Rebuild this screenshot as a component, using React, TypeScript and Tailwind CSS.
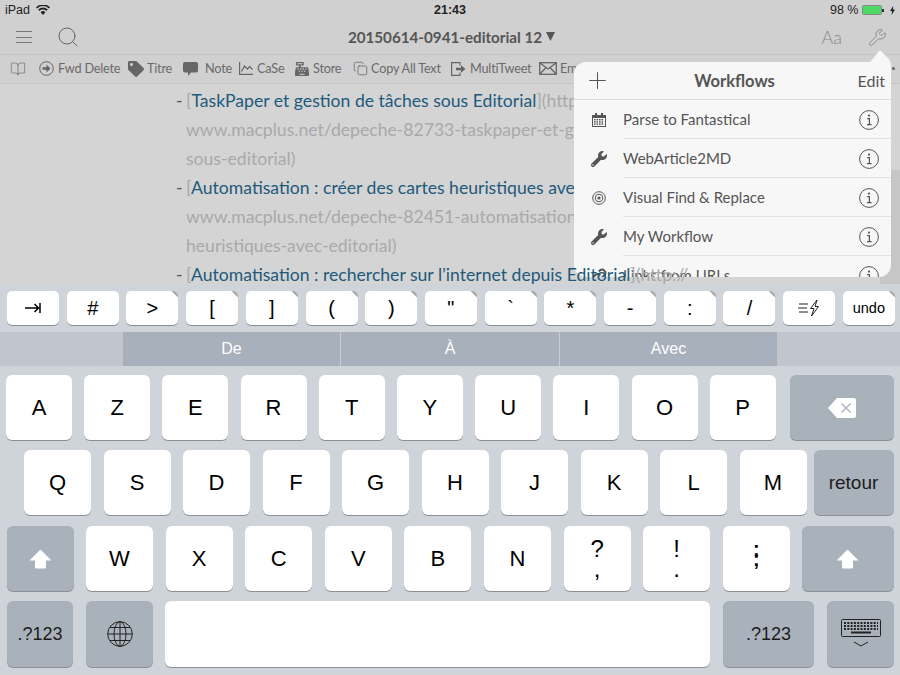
import type { ReactNode } from "react";
import { BookOpen, Copy, Plus, Search, Wrench } from "lucide-react";
import { FaCashRegister, FaTag, FaWrench } from "react-icons/fa";

const UI_FONT = "font-['Lato','Noto_Sans',sans-serif]";
const KEY_FONT = "font-['Liberation_Sans',Arial,sans-serif]";

function Corner() {
  return (
    <svg className="absolute top-0 right-0" width="8" height="8" viewBox="0 0 8 8">
      <path d="M1.500 0H3a5 5 0 0 1 5 5v1.500z" fill="#a6a6a6" />
    </svg>
  );
}

function SmallKey({ children, corner = true }: { children: ReactNode; corner?: boolean }) {
  return (
    <div className="relative flex h-[34px] w-[52px] items-center justify-center rounded-[5px] bg-white text-[20px] leading-none text-black shadow-[0_1px_0_#8b8f95]">
      {corner ? <Corner /> : null}
      {children}
    </div>
  );
}

function Key({
  children,
  className = "w-[66px]",
  text = "text-[22px]",
  dark = false,
}: {
  children?: ReactNode;
  className?: string;
  text?: string;
  dark?: boolean;
}) {
  return (
    <div
      className={`flex h-full items-center justify-center rounded-[6px] leading-none shadow-[0_1px_0_#8b8f95] ${
        dark ? "bg-[#a9b1bb] text-[#1c1c1c]" : "bg-white text-black"
      } ${text} ${className}`}
    >
      {children}
    </div>
  );
}

function ShiftIcon() {
  return (
    <svg width="23" height="20" viewBox="0 0 23 20" fill="#fff">
      <path d="M11.500 0.500 22.500 11.500H17V18a1.500 1.500 0 0 1-1.500 1.500h-8A1.500 1.500 0 0 1 6 18V11.500H.5z" />
    </svg>
  );
}

function ToolItem({ icon, label, className }: { icon: ReactNode; label: string; className: string }) {
  return (
    <div className={`flex shrink-0 items-center gap-[3px] whitespace-nowrap ${className}`}>
      {icon}
      <span>{label}</span>
    </div>
  );
}

function InfoIcon() {
  return (
    <svg width="20" height="20" viewBox="0 0 20 20" fill="none" stroke="#555" className="shrink-0">
      <circle cx="10" cy="10" r="9.400" strokeWidth="1" />
      <path d="M8.200 8.600H10.400V14.600M8 14.600H12.600" strokeWidth="1.200" />
      <circle cx="10" cy="5.600" r="1.100" fill="#555" stroke="none" />
    </svg>
  );
}

function CalendarIcon() {
  return (
    <svg width="14" height="14" viewBox="0 0 14 14" fill="#555">
      <path d="M0 2h14v12H0zM1 5v8h12V5z" fillRule="evenodd" />
      <rect x="3" y="0" width="2" height="3" />
      <rect x="9" y="0" width="2" height="3" />
      {[2, 4.5, 7, 9.5].map((x) => (
        <g key={x}>
          <rect x={x} y="6" width="1.600" height="1.400" />
          <rect x={x} y="8.200" width="1.600" height="1.400" />
          <rect x={x} y="10.400" width="1.600" height="1.400" />
        </g>
      ))}
    </svg>
  );
}

function TargetIcon() {
  return (
    <svg width="14" height="14" viewBox="0 0 14 14" fill="none" stroke="#555">
      <circle cx="7" cy="7" r="6.300" strokeWidth="1" />
      <circle cx="7" cy="7" r="3.800" strokeWidth="1" />
      <circle cx="7" cy="7" r="1.600" fill="#555" stroke="none" />
    </svg>
  );
}

function LinkIcon() {
  return (
    <svg width="16" height="16" viewBox="0 0 24 24" fill="none" stroke="#555" strokeWidth="3">
      <path d="M10 13a5 5 0 0 0 7.500.5l3-3a5 5 0 0 0-7-7l-1.700 1.700" />
      <path d="M14 11a5 5 0 0 0-7.500-.5l-3 3a5 5 0 0 0 7 7l1.700-1.700" />
    </svg>
  );
}

const workflows: { name: string; icon: ReactNode }[] = [
  { name: "Parse to Fantastical", icon: <CalendarIcon /> },
  { name: "WebArticle2MD", icon: <FaWrench size={16} color="#555" /> },
  { name: "Visual Find & Replace", icon: <TargetIcon /> },
  { name: "My Workflow", icon: <FaWrench size={16} color="#555" /> },
  { name: "Links from URLs", icon: <LinkIcon /> },
];

function WorkflowsPopover() {
  return (
    <div className={`absolute top-[50px] left-[574px] z-10 w-[317px] ${UI_FONT}`}>
      <svg className="absolute top-0 right-0" width="24" height="26" viewBox="0 0 24 26" fill="#f7f7f7">
        <path d="M0 12.500Q3 12.500 5 10L12 1Q13 0 14.500 1.500L21 8Q24 11 24 15V26H0z" />
      </svg>
      <div className="mt-[12px] h-[215px] overflow-hidden rounded-[12px] bg-[#f7f7f7] text-[#555]">
        <div className="relative flex h-[38px] items-center justify-center border-b border-[#dcdcdc] pt-[2px] pl-[4px]">
          <Plus className="absolute top-[5px] left-[10px]" size={27} strokeWidth={0.9} color="#555" />
          <span className="text-[16.5px] font-bold text-[#555]">Workflows</span>
          <span className="absolute top-[7px] right-[6px] text-[16px]">Edit</span>
        </div>
        {workflows.map((item) => (
          <div key={item.name} className="flex h-[39px] items-center">
            <div className="flex w-[49px] shrink-0 items-center justify-center">{item.icon}</div>
            <div className="flex h-full flex-1 items-center justify-between border-b border-[#e2e2e2] pt-[1px] pr-[12px] text-[15px]">
              <span>{item.name}</span>
              <InfoIcon />
            </div>
          </div>
        ))}
      </div>
    </div>
  );
}

function BulletLine({ title, raised = false }: { title: string; raised?: boolean }) {
  return (
    <div className={`-ml-[10px] ${raised ? "relative z-20" : ""}`}>
      <span className="inline-block w-[10px] text-[#555]">-</span>[
      <span className="text-[#1e5a7c]">{title}</span>](http://
    </div>
  );
}

const row1 = ["A", "Z", "E", "R", "T", "Y", "U", "I", "O", "P"];
const row2 = ["Q", "S", "D", "F", "G", "H", "J", "K", "L", "M"];
const row3 = ["W", "X", "C", "V", "B", "N"];

export default function App() {
  return (
    <div className="relative flex h-[675px] w-[900px] flex-col overflow-hidden bg-[#d0d0d0]">
      <div className={`flex h-[20px] shrink-0 items-center justify-between px-[5px] text-[12.5px] text-[#222] ${KEY_FONT}`}>
        <div className="flex w-[120px] items-center gap-[6px]">
          <span>iPad</span>
          <svg width="14" height="10" viewBox="0 0 14 10" fill="#222">
            <path d="M7 10 4.600 7.200a3.400 3.400 0 0 1 4.800 0zM3.500 6 2.200 4.600a6.800 6.800 0 0 1 9.600 0L10.500 6a5 5 0 0 0-7 0zM1.200 3.600 0 2.300a9.800 9.800 0 0 1 14 0l-1.200 1.300a8 8 0 0 0-11.600 0z" />
          </svg>
        </div>
        <span className="font-bold">21:43</span>
        <div className="flex w-[120px] items-center justify-end gap-[4px]">
          <span>98 %</span>
          <div className="flex items-center">
            <div className="h-[10px] w-[20px] rounded-[1.5px] border border-[#888] bg-[#4cd964]" />
            <div className="h-[3px] w-[1.5px] bg-[#333]" />
          </div>
          <svg width="5" height="9" viewBox="0 0 5 9" fill="#222" className="ml-[2px]">
            <path d="M3.200 0 0 5h2L1.600 9 5 3.600H3z" />
          </svg>
        </div>
      </div>

      <div className={`flex h-[35px] shrink-0 items-center justify-between border-b border-[#c4c4c4] pr-[13px] pl-[16px] ${UI_FONT}`}>
        <div className="flex w-[120px] items-center gap-[24px]">
          <div className="flex w-[16px] flex-col gap-[4.5px]">
            <div className="h-px bg-[#777]" />
            <div className="h-px bg-[#777]" />
            <div className="h-px bg-[#777]" />
          </div>
          <Search size={24} strokeWidth={1} color="#666" />
        </div>
        <div className="flex items-center gap-[4px] text-[15.2px] font-bold text-[#555]">
          <span>20150614-0941-editorial 12</span>
          <svg width="9" height="9" viewBox="0 0 9 9" fill="#555">
            <path d="M0 0h9L4.500 9z" />
          </svg>
        </div>
        <div className="flex w-[120px] items-center justify-end gap-[26px]">
          <span className="text-[18px] font-light text-[#8a8a8a]">Aa</span>
          <Wrench size={19} strokeWidth={1} color="#777" />
        </div>
      </div>

      <div className={`relative flex h-[29px] shrink-0 items-center overflow-hidden border-b border-[#c4c4c4] pl-[10px] text-[12.7px] tracking-[-0.2px] text-[#6a6a6a] ${UI_FONT}`}>
        <div className="w-[29px] shrink-0">
          <BookOpen size={16} strokeWidth={1} color="#666" />
        </div>
        <ToolItem
          className="w-[89px]"
          label="Fwd Delete"
          icon={
            <svg width="15" height="15" viewBox="0 0 15 15" fill="none" stroke="#666" className="mr-[1px]">
              <circle cx="7.500" cy="7.500" r="6.800" />
              <path d="M3.500 6.200H7.500V3.600L11.500 7.500 7.500 11.400V8.800H3.500z" fill="#666" stroke="none" />
            </svg>
          }
        />
        <ToolItem className="w-[55px]" label="Titre" icon={<FaTag size={16} color="#666" />} />
        <ToolItem
          className="w-[56px]"
          label="Note"
          icon={
            <svg width="15" height="14" viewBox="0 0 15 14" fill="#666" className="mr-[4px]">
              <path d="M2 0H13a2 2 0 0 1 2 2V8.500a2 2 0 0 1-2 2H8L5 14V10.500H2a2 2 0 0 1-2-2V2a2 2 0 0 1 2-2z" />
            </svg>
          }
        />
        <ToolItem
          className="w-[56px]"
          label="CaSe"
          icon={
            <svg width="14" height="13" viewBox="0 0 14 13" fill="none" stroke="#666" strokeWidth="1.200" className="mr-[1px]">
              <path d="M.6 0v12.400H14M2.500 9.500 5.500 4l3 3 2-2.500 3 3" />
            </svg>
          }
        />
        <ToolItem className="w-[58px]" label="Store" icon={<FaCashRegister size={14} color="#666" className="mr-[1px]" />} />
        <ToolItem className="w-[98px]" label="Copy All Text" icon={<Copy size={15} strokeWidth={1.25} color="#666" />} />
        <ToolItem
          className="w-[88px]"
          label="MultiTweet"
          icon={
            <svg width="15" height="14" viewBox="0 0 15 14" fill="none" stroke="#666" strokeWidth="1.200" className="mr-[1px]">
              <path d="M9 3.500V.6H.6v12.800H9V10.500" />
              <path d="M5 5.800H10V3.200L14.500 7 10 10.800V8.200H5z" fill="#666" stroke="none" />
            </svg>
          }
        />
        <ToolItem
          className="w-[60px]"
          label="Em"
          icon={
            <svg width="18" height="13" viewBox="0 0 18 13" fill="none" stroke="#666" strokeWidth="1.300">
              <rect x=".7" y=".7" width="16.600" height="11.600" />
              <path d="M1 1l8 6 8-6M1 12l6-6.500M17 12l-6-6.500" />
            </svg>
          }
        />
        <div className="absolute top-[12px] right-[5px] h-[3px] w-[3px] rounded-full bg-[#666]" />
      </div>

      <div className={`h-[200px] shrink-0 bg-[#d4d4d4] pt-[2px] pl-[186px] text-[17.6px] leading-[29px] whitespace-nowrap text-[#a9a9a9] ${UI_FONT}`}>
        <BulletLine title="TaskPaper et gestion de tâches sous Editorial" />
        <div>www.macplus.net/depeche-82733-taskpaper-et-gestion-de-taches-</div>
        <div>sous-editorial)</div>
        <BulletLine title="Automatisation : créer des cartes heuristiques avec Editorial" />
        <div>www.macplus.net/depeche-82451-automatisation-creer-des-cartes-</div>
        <div>heuristiques-avec-editorial)</div>
        <BulletLine raised title="Automatisation : rechercher sur l’internet depuis Editorial" />
      </div>

      <div className="absolute top-[170px] right-0 h-[114px] w-[20px] bg-[#c6c6c6]" />
      <WorkflowsPopover />

      <div className={`relative z-30 flex h-[391px] shrink-0 flex-col bg-[#cfd3da] pt-[7px] ${KEY_FONT}`}>
        <div className="flex justify-between pr-[5px] pl-[7px]">
          <SmallKey corner={false}>
            <svg width="16" height="12" viewBox="0 0 16 12" fill="none" stroke="#000" strokeWidth="1.500">
              <path d="M0 6h13M9.500 2 13.500 6 9.500 10M15 1v10" />
            </svg>
          </SmallKey>
          <SmallKey corner={false}>#</SmallKey>
          <SmallKey>&gt;</SmallKey>
          <SmallKey>[</SmallKey>
          <SmallKey>]</SmallKey>
          <SmallKey>(</SmallKey>
          <SmallKey>)</SmallKey>
          <SmallKey>"</SmallKey>
          <SmallKey>`</SmallKey>
          <SmallKey>*</SmallKey>
          <SmallKey>-</SmallKey>
          <SmallKey>:</SmallKey>
          <SmallKey>/</SmallKey>
          <SmallKey corner={false}>
            <svg width="22" height="18" viewBox="0 0 22 18" fill="none" stroke="#222" strokeWidth="1">
              <path d="M1 5h9M0 9h9M1 13h9" />
              <path d="M19 1 12.500 9.500H16L13.500 17 20.500 7.500H17z" />
            </svg>
          </SmallKey>
          <SmallKey>
            <span className="text-[14.5px]">undo</span>
          </SmallKey>
        </div>

        <div className="mt-[7px] flex h-[34px] text-[16px] text-white">
          <div className="w-[123px] bg-[#c1c6ce]" />
          <div className="flex w-[218px] items-center justify-center border-r border-[#c8cdd4] bg-[#a8b0bb]">De</div>
          <div className="flex w-[219px] items-center justify-center border-r border-[#c8cdd4] bg-[#a8b0bb]">À</div>
          <div className="flex w-[217px] items-center justify-center bg-[#a8b0bb]">Avec</div>
          <div className="flex-1 bg-[#c1c6ce]" />
        </div>

        <div className="mt-[9px] flex h-[65px] pl-[6px]">
          <div className="flex gap-[12.2px]">
            {row1.map((k) => (
              <Key key={k}>{k}</Key>
            ))}
          </div>
          <Key dark className="ml-[14px] w-[104px]">
            <svg width="28" height="20" viewBox="0 0 28 20">
              <path d="M9 0H26a2 2 0 0 1 2 2V18a2 2 0 0 1-2 2H9L0 10z" fill="#fff" />
              <path d="M13.500 5.500 22.500 14.500M22.500 5.500 13.500 14.500" stroke="#a9b1bb" strokeWidth="1.300" />
            </svg>
          </Key>
        </div>

        <div className="mt-[10px] flex h-[65px] pl-[24px]">
          <div className="flex gap-[12.5px]">
            {row2.map((k) => (
              <Key key={k} className="w-[67px]">
                {k}
              </Key>
            ))}
          </div>
          <Key dark className="ml-[7px] w-[80px]" text="text-[19px]">
            retour
          </Key>
        </div>

        <div className="mt-[11px] flex h-[65px] pl-[7px]">
          <Key dark className="w-[67px]">
            <ShiftIcon />
          </Key>
          <div className="ml-[12px] flex gap-[12.6px]">
            {row3.map((k) => (
              <Key key={k} className="w-[67px]">
                {k}
              </Key>
            ))}
            <Key className="w-[67px] flex-col" text="text-[24px]">
              <span className="leading-[20px]">?</span>
              <span className="leading-[20px]">,</span>
            </Key>
            <Key className="w-[67px] flex-col" text="text-[24px]">
              <span className="leading-[20px]">!</span>
              <span className="leading-[20px]">.</span>
            </Key>
            <Key className="w-[67px] flex-col pb-[10px] font-bold" text="text-[20px]">
              <span className="leading-[10px]">:</span>
              <span className="leading-[10px]">;</span>
            </Key>
          </div>
          <Key dark className="ml-[12px] w-[92px]">
            <ShiftIcon />
          </Key>
        </div>

        <div className="mt-[10px] flex h-[66px] pl-[7px]">
          <Key dark className="w-[66px]" text="text-[18px]">
            .?123
          </Key>
          <Key dark className="ml-[13px] w-[67px]">
            <svg width="26" height="26" viewBox="0 0 26 26" fill="none" stroke="#222" strokeWidth="1">
              <circle cx="13" cy="13" r="12.300" />
              <ellipse cx="13" cy="13" rx="6" ry="12.300" />
              <path d="M13 .7V25.300M.7 13H25.300M3 6.500H23M3 19.500H23" />
            </svg>
          </Key>
          <Key className="ml-[12px] w-[545px]" />
          <Key dark className="ml-[13px] w-[91px]" text="text-[18px]">
            .?123
          </Key>
          <Key dark className="ml-[13px] w-[67px]">
            <svg width="40" height="30" viewBox="0 0 40 30" fill="none" stroke="#222">
              <rect x=".5" y=".5" width="39" height="17" rx="1" />
              <path d="M3 4h34M3 7h34M3 10h34" strokeWidth="2" strokeDasharray="2 1.300" />
              <path d="M10 13.500h20" strokeWidth="2" />
              <path d="M13 23l7 4 7-4" strokeWidth="1" />
            </svg>
          </Key>
        </div>
      </div>
    </div>
  );
}
